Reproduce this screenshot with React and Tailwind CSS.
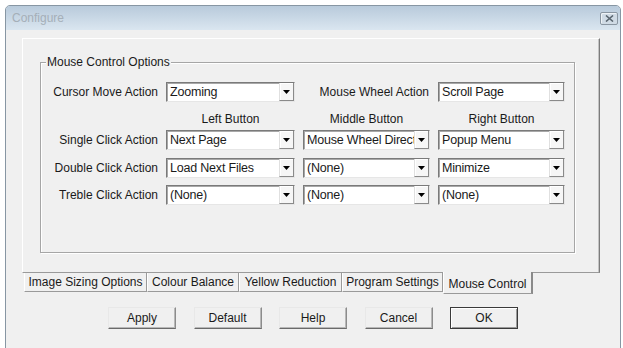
import React from 'react'

// Configure dialog — Mouse Control tab

function Arrow() {
  return (
    <svg width="7" height="4" viewBox="0 0 7 4" className="block">
      <path d="M0 0h7L3.5 4z" fill="#000" />
    </svg>
  )
}

function Combo({ value }) {
  return (
    <div className="flex h-[20px] w-full border border-t-[#7a7a7a] border-l-[#7a7a7a] border-b-[#e6e6e6] border-r-[#e6e6e6] bg-white shadow-[inset_1px_1px_0_#a8a8a8]">
      <div className="flex-1 overflow-hidden whitespace-nowrap pl-[3px] pt-[1px] text-[12.5px] leading-[17px] tracking-[-0.2px]">{value}</div>
      <div className="flex w-[15px] shrink-0 items-center justify-center border-b border-r border-l border-b-[#8a8a8a] border-r-[#8a8a8a] border-l-[#e0e0e0] bg-[#f6f6f6] shadow-[inset_1px_1px_0_#fff]">
        <Arrow />
      </div>
    </div>
  )
}

function Tab({ label, w, active }) {
  if (active) {
    return (
      <div
        className="-mt-[1px] flex h-[22px] items-center justify-center border-r-2 border-b border-l border-r-[#8a8a8a] border-b-[#9a9a9a] border-l-white bg-[#f0f0f0] pt-[3px]"
        style={{ width: w }}
      >
        {label}
      </div>
    )
  }
  return (
    <div
      className="flex h-[19px] items-center justify-center border-r border-b border-l border-r-[#9a9a9a] border-b-[#9a9a9a] border-l-white bg-[#f0f0f0]"
      style={{ width: w }}
    >
      {label}
    </div>
  )
}

function Btn({ label, def }) {
  return (
    <div
      className={`flex h-[22px] w-[68px] items-center justify-center bg-[#f0f0f0] ${
        def
          ? 'border border-[#3a3a3a] shadow-[inset_1px_1px_0_#fff,inset_-1px_-1px_0_#9a9a9a]'
          : 'border border-t-[#e8e8e8] border-l-[#e8e8e8] border-r-[#8c8c8c] border-b-[#6a6a6a] shadow-[inset_-1px_-1px_0_#b8b8b8]'
      }`}
    >
      {label}
    </div>
  )
}

export default function App() {
  const rows = [
    { label: 'Single Click Action', vals: ['Next Page', 'Mouse Wheel Direct', 'Popup Menu'], mt: 'mt-0' },
    { label: 'Double Click Action', vals: ['Load Next Files', '(None)', 'Minimize'], mt: 'mt-[8px]' },
    { label: 'Treble Click Action', vals: ['(None)', '(None)', '(None)'], mt: 'mt-[7px]' },
  ]

  return (
    <div className="h-[348px] w-[623px] overflow-hidden bg-white pl-[5px] pt-[5px] font-['Liberation_Sans',Arial,sans-serif] text-[12px] text-[#1a1a1a]">
      <div className="flex h-[345px] w-[616px] flex-col overflow-hidden rounded-t-[5px] border border-[#8796a3] bg-[#f0f0f0]">
        {/* title bar */}
        <div className="flex h-[24px] shrink-0 items-center justify-between bg-gradient-to-b from-[#b8cadb] to-[#dae6f0] pl-[6px] pr-[2px]">
          <span className="text-[#a5afb8]">Configure</span>
          <div className="flex h-[13px] w-[18px] items-center justify-center rounded-[2px] border border-[#8a96a2] bg-[#d0dbe5] shadow-[inset_1px_1px_0_#eef3f7]">
            <svg width="9" height="7" viewBox="0 0 9 7">
              <path d="M1 0.5l7 6M8 0.5l-7 6" stroke="#5a6670" strokeWidth="1.6" />
            </svg>
          </div>
        </div>

        {/* body */}
        <div className="flex-1 pl-[16px] pt-[8px]">
          {/* tab panel */}
          <div className="h-[235px] w-[578px] border border-t-white border-l-white border-b-[#9a9a9a] border-r-[#7c7c7c] pl-[17px] pt-[23px] shadow-[inset_-1px_0_0_#c4c4c4]">
            {/* group box */}
            <div className="relative h-[191px] w-[535px] border border-[#a6a6a6] pt-[19px] shadow-[inset_1px_1px_0_#fff,1px_1px_0_#fff]">
              <span className="absolute -top-[8px] left-[5px] bg-[#f0f0f0] px-[1px] leading-[14px]">
                Mouse Control Options
              </span>

              <div className="grid grid-cols-[117px_129px_127px_127px] gap-x-[8px]">
                <div className="flex h-[20px] items-center justify-end">Cursor Move Action</div>
                <Combo value="Zooming" />
                <div className="flex h-[20px] items-center justify-end pr-[1px]">Mouse Wheel Action</div>
                <Combo value="Scroll Page" />

                <div className="h-[28px]" />
                <div className="flex h-[28px] items-end justify-center pb-[2px]">Left Button</div>
                <div className="flex h-[28px] items-end justify-center pb-[2px]">Middle Button</div>
                <div className="flex h-[28px] items-end justify-center pb-[2px]">Right Button</div>

                {rows.map((r) => (
                  <React.Fragment key={r.label}>
                    <div className={`flex h-[20px] items-center justify-end ${r.mt}`}>{r.label}</div>
                    {r.vals.map((v, i) => (
                      <div key={i} className={r.mt}>
                        <Combo value={v} />
                      </div>
                    ))}
                  </React.Fragment>
                ))}
              </div>
            </div>
          </div>

          {/* tabs */}
          <div className="ml-[2px] flex h-[21px] items-start">
            <Tab label="Image Sizing Options" w={123} />
            <Tab label="Colour Balance" w={92} />
            <Tab label="Yellow Reduction" w={103} />
            <Tab label="Program Settings" w={101} />
            <Tab label="Mouse Control" w={90} active />
          </div>

          {/* buttons */}
          <div className="mt-[13px] flex gap-x-[17.5px] pl-[86px]">
            <Btn label="Apply" />
            <Btn label="Default" />
            <Btn label="Help" />
            <Btn label="Cancel" />
            <Btn label="OK" def />
          </div>
        </div>
      </div>
    </div>
  )
}
